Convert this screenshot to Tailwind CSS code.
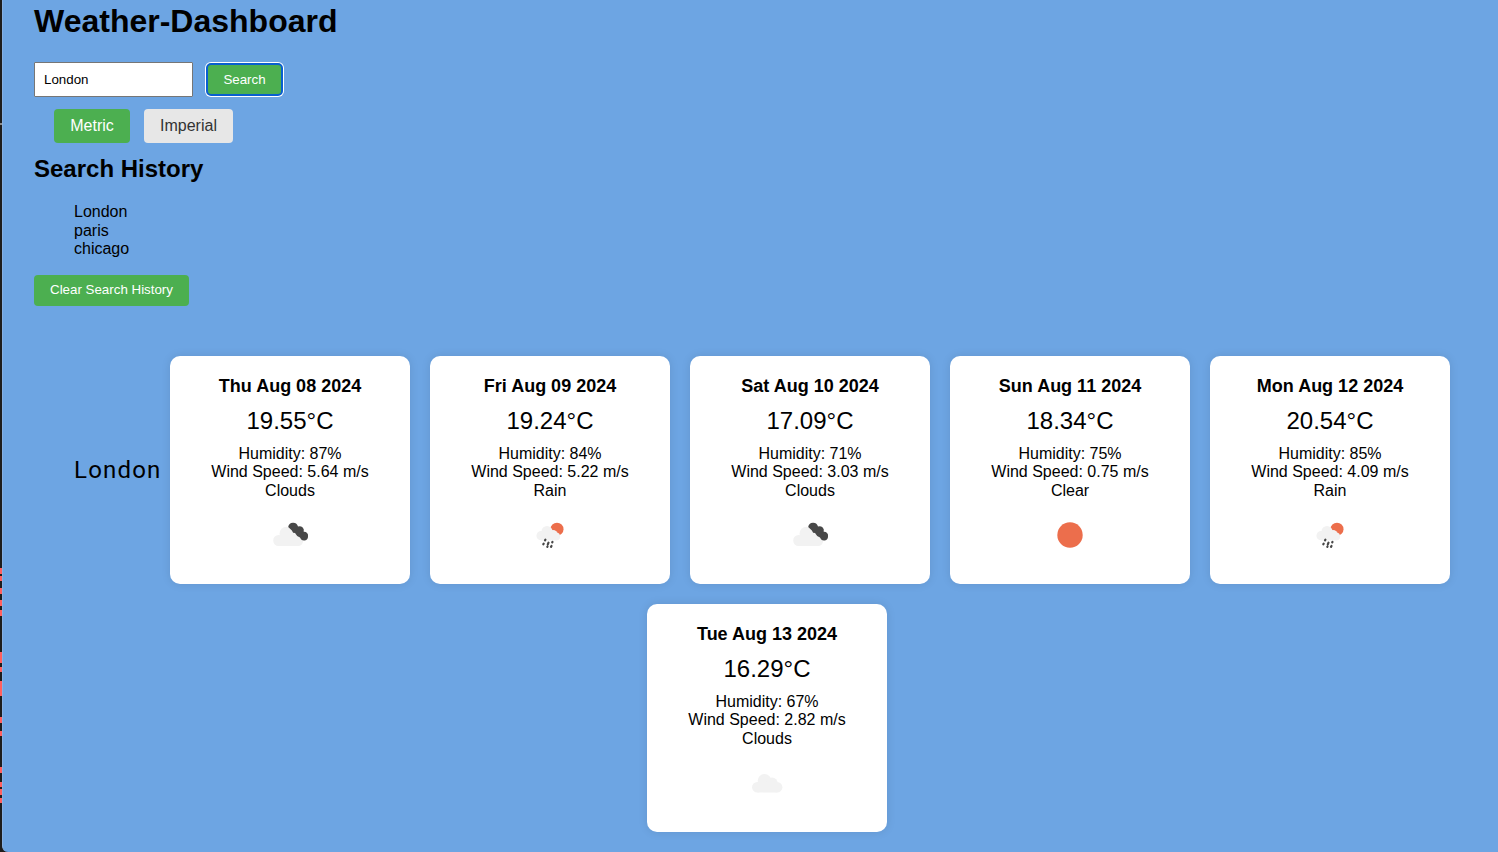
<!DOCTYPE html>
<html lang="en">
<head>
<meta charset="utf-8">
<title>Weather-Dashboard</title>
<script src="https://cdn.jsdelivr.net/npm/@tailwindcss/browser@4"></script>
</head>
<body class="flex h-[852px] w-[1498px] overflow-hidden bg-[#1d1d1d] font-['Liberation_Sans',Arial,sans-serif] text-base leading-[18.5px] text-black">
<svg width="0" height="0" class="absolute">
  <symbol id="cloud" viewBox="0 0 50 50">
    <g fill="#f2f2f2"><circle cx="15.300" cy="29.200" r="5.300"/><circle cx="22.500" cy="22.700" r="6.800"/><circle cx="30" cy="25.300" r="5.800"/><circle cx="35.200" cy="29.300" r="5.200"/><path d="M15.300 25h20v9.500h-20z"/></g>
  </symbol>
  <symbol id="broken" viewBox="0 0 50 50">
    <g fill="#f2f2f2"><circle cx="13.700" cy="30.500" r="5.500"/><circle cx="21.500" cy="23.800" r="7"/><circle cx="30" cy="27" r="6"/><circle cx="33" cy="30.800" r="5.200"/><path d="M13.700 26h19.300v10h-19.300z"/></g>
    <path fill="#484848" d="M23.200 17a5 5 0 0 1 9.800-.5a4.300 4.300 0 0 1 5.700 5.200a4 4 0 0 1 4.300 4.800a4 4 0 0 1-7.600 1.800l-.4-.7a6.500 6.500 0 0 1-4.300-3.600l-.6-1-2-.2-1.200-2.300z"/>
  </symbol>
  <symbol id="rain" viewBox="0 0 50 50">
    <circle cx="32" cy="19.200" r="6.500" fill="#ec6e4c"/>
    <g fill="#f2f2f2"><circle cx="16" cy="25.700" r="4.600"/><circle cx="22" cy="21.500" r="5.500"/><circle cx="28" cy="24.600" r="4.600"/><circle cx="31" cy="26.500" r="4.100"/><path d="M16 22.500h13v8h-13z"/></g>
    <g stroke="#484848" stroke-width="2.200" stroke-linecap="round">
      <path d="M20.400 29.700l-.4.700M18.700 33.600l-.4.700M23.500 32.700l-.7 1.700M27.500 31.900l-.3.500M22.500 36.500l-.2.300M26.500 36l-.5.900"/>
    </g>
  </symbol>
  <symbol id="clear" viewBox="0 0 50 50"><circle cx="25" cy="25" r="12.700" fill="#ec6e4c"/></symbol>
</svg>

<svg class="h-[852px] w-0.5 shrink-0" viewBox="0 0 2 852" shape-rendering="crispEdges">
  <path fill="#8b8b8b" d="M0 123h2v2H0z"/>
  <path fill="#ff6060" d="M0 568h2v6H0zM0 576h2v5H0zM0 588h2v6H0zM0 600h2v6H0zM0 610h2v6H0zM0 652h2v11H0zM0 667h2v5H0zM0 681h2v15H0zM0 717h2v6H0zM0 731h2v5H0zM0 767h2v6H0zM0 782h2v5H0zM0 789h2v6H0zM0 798h2v5H0z"/>
</svg>

<main class="h-full flex-1 rounded-bl-[6px] border-l border-[#86b0e3] bg-[#6da5e3] pl-[31px]">
  <h1 class="pt-[3px] text-[32px] leading-[37px] font-bold">Weather-Dashboard</h1>
  <div class="mt-[22px] flex items-center">
    <input type="text" value="London" class="h-[35px] w-[159px] rounded-[1px] border border-[#767676] bg-white px-[9px] pb-px text-[13.333px] outline-none">
    <button class="ml-[14px] h-[31px] w-[75px] rounded-[4px] bg-[#4caf50] pt-px text-[13.333px] text-white outline-2 -outline-offset-1 outline-[#0a5fcf] shadow-[0_0_0_2px_#ffffff]">Search</button>
  </div>
  <div class="mt-3 flex gap-3.5 pl-5">
    <button class="h-[34px] w-[76px] rounded-[4px] bg-[#4caf50] text-white">Metric</button>
    <button class="h-[34px] w-[89px] rounded-[4px] bg-[#e7e7e7] text-[#333333]">Imperial</button>
  </div>
  <h2 class="mt-3 text-2xl leading-[28px] font-bold">Search History</h2>
  <ul class="mt-5 pl-10">
    <li>London</li>
    <li>paris</li>
    <li>chicago</li>
  </ul>
  <button class="mt-4 block h-[31px] w-[155px] rounded-[4px] bg-[#4caf50] text-[13.333px] text-white">Clear Search History</button>

  <section id="forecast" class="mt-10 flex w-[1426px] flex-wrap items-center justify-center pl-10">
    <div class="w-[86px] whitespace-nowrap font-['Roboto',sans-serif] text-2xl leading-7 tracking-[1.200px]">London</div>
  </section>
</main>
<script>
const days = [
  ['Thu Aug 08 2024', '19.55', 87, '5.64', 'Clouds', 'broken'],
  ['Fri Aug 09 2024', '19.24', 84, '5.22', 'Rain', 'rain'],
  ['Sat Aug 10 2024', '17.09', 71, '3.03', 'Clouds', 'broken'],
  ['Sun Aug 11 2024', '18.34', 75, '0.75', 'Clear', 'clear'],
  ['Mon Aug 12 2024', '20.54', 85, '4.09', 'Rain', 'rain'],
  ['Tue Aug 13 2024', '16.29', 67, '2.82', 'Clouds', 'cloud']
];
document.getElementById('forecast').insertAdjacentHTML('beforeend', days.map(([date, temp, hum, wind, sky, icon]) => `
  <article class="m-2.5 flex h-[228px] w-[240px] flex-col items-center rounded-[10px] bg-white pt-5 text-center shadow-[0_0_10px_rgba(0,0,0,0.1)]">
    <h3 class="text-lg leading-[21px] font-bold">${date}</h3>
    <div class="mt-2.5 text-2xl leading-[28px]">${temp}°C</div>
    <div class="mt-2.5">Humidity: ${hum}%</div>
    <div>Wind Speed: ${wind} m/s</div>
    <div>${sky}</div>
    <svg class="mt-2.5 size-[50px]"><use href="#${icon}"/></svg>
  </article>`).join(''));
</script>
</body>
</html>
